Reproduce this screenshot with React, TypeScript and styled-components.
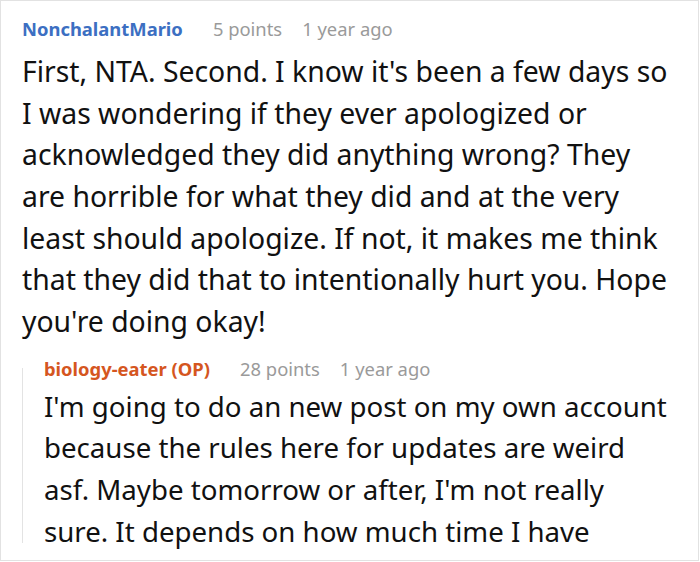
import React from "react";
import styled, { createGlobalStyle } from "styled-components";

const Global = createGlobalStyle`
  html, body { margin: 0; padding: 0; background: #fff; }
  body { font-family: "Noto Sans", "Open Sans", sans-serif; }
`;

const Frame = styled.div`
  width: 699px;
  height: 561px;
  box-sizing: border-box;
  border: 1px solid #e2e2e2;
  overflow: hidden;
  padding: 15px 0 0 21px;
`;

const Comment = styled.div`
  display: flex;
  flex-direction: column;
`;

const Reply = styled.div`
  display: flex;
  margin-top: 13px;
  gap: 21px;
`;

const Rail = styled.div`
  flex: none;
  width: 1px;
  height: 175px;
  margin-top: 12px;
  background: #e3e3e3;
`;

const Header = styled.div`
  display: flex;
  align-items: baseline;
  height: 26px;
  line-height: 26px;
  font-size: 18.4px;
`;

const Author = styled.span<{ $op?: boolean }>`
  font-weight: 700;
  color: ${(p) => (p.$op ? "#d5561f" : "#3c6fc2")};
  margin-right: 30px;
`;

const Meta = styled.span`
  color: #9a9a9a;
  margin-right: 20px;
`;

const Body = styled.div<{ $size: number; $gap: number }>`
  margin-top: ${(p) => p.$gap}px;
  font-size: ${(p) => p.$size}px;
  line-height: 41.67px;
  color: #111;
`;

const Line = styled.span`
  display: block;
  white-space: nowrap;
`;

const first = [
  "First, NTA. Second. I know it's been a few days so",
  "I was wondering if they ever apologized or",
  "acknowledged they did anything wrong? They",
  "are horrible for what they did and at the very",
  "least should apologize. If not, it makes me think",
  "that they did that to intentionally hurt you. Hope",
  "you're doing okay!",
];

const reply = [
  "I'm going to do an new post on my own account",
  "because the rules here for updates are weird",
  "asf. Maybe tomorrow or after, I'm not really",
  "sure. It depends on how much time I have",
];

export default function App() {
  return (
    <>
      <Global />
      <Frame>
        <Comment>
          <Header>
            <Author>NonchalantMario</Author>
            <Meta>5 points</Meta>
            <Meta>1 year ago</Meta>
          </Header>
          <Body $size={28.35} $gap={9}>
            {first.map((l) => (
              <Line key={l}>{l}</Line>
            ))}
          </Body>
        </Comment>
        <Reply>
          <Rail />
          <Comment>
            <Header>
              <Author $op>biology-eater (OP)</Author>
              <Meta>28 points</Meta>
              <Meta>1 year ago</Meta>
            </Header>
            <Body $size={27.65} $gap={4}>
              {reply.map((l) => (
                <Line key={l}>{l}</Line>
              ))}
            </Body>
          </Comment>
        </Reply>
      </Frame>
    </>
  );
}
